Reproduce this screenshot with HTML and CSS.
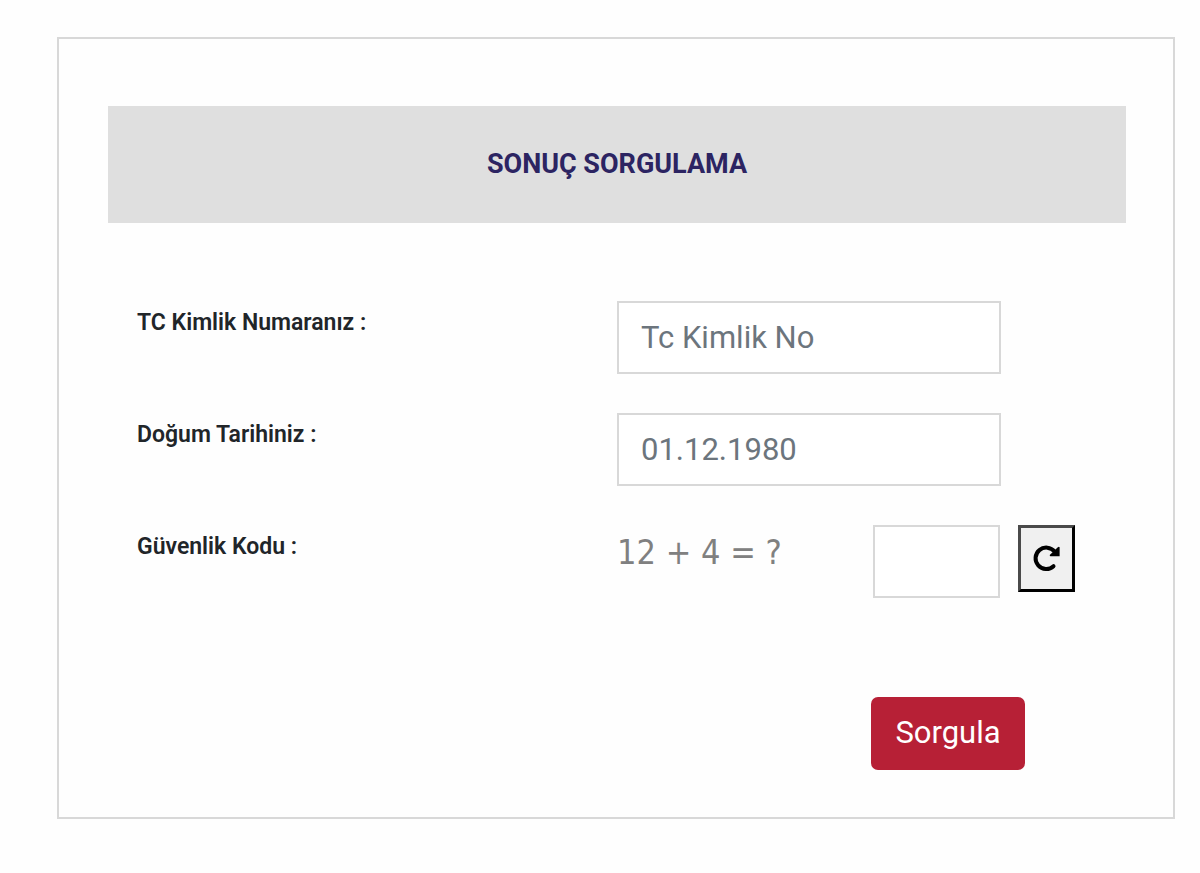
FILE: index.html
```html
<!DOCTYPE html>
<html lang="tr">
<head>
  <meta charset="utf-8">
  <meta name="viewport" content="width=device-width, initial-scale=1">
  <title>Sonuç Sorgulama</title>
  <link rel="stylesheet" href="styles.css">
</head>
<body>
  <main class="panel">
    <h1 class="panel-title">SONUÇ SORGULAMA</h1>
    <form class="query-form">
      <div class="row">
        <label class="label" for="tc">TC Kimlik Numaranız :</label>
        <div class="control"><input class="field" id="tc" type="text" placeholder="Tc Kimlik No"></div>
      </div>
      <div class="row">
        <label class="label" for="birth">Doğum Tarihiniz :</label>
        <div class="control"><input class="field" id="birth" type="text" placeholder="01.12.1980"></div>
      </div>
      <div class="row">
        <label class="label" for="code">Güvenlik Kodu :</label>
        <div class="control captcha">
          <span class="question">12 + 4 = ?</span>
          <input class="field code" id="code" type="text">
          <button class="refresh" type="button" aria-label="Kodu yenile">
            <svg width="28" height="28" viewBox="0 0 28 28" aria-hidden="true">
              <path d="M20.5 21.2A10.7 10.7 0 1 1 21.6 6.6" fill="none" stroke="#000" stroke-width="4" stroke-linecap="round"/>
              <path d="M26.6 2.2V11.3H17.4Q16.2 10.8 17 9.8L24.8 2.2Q26 1.2 26.6 2.2Z" fill="#000"/>
            </svg>
          </button>
        </div>
      </div>
      <div class="row actions">
        <button class="submit" type="submit">Sorgula</button>
      </div>
    </form>
  </main>
</body>
</html>
```

FILE: styles.css
```css
* {
  box-sizing: border-box;
}

body {
  margin: 0;
  padding: 37px 25px 54px 57px;
  background: #fefefe;
  color: #212529;
  font-family: Roboto, "Liberation Sans", sans-serif;
}

.panel {
  padding: 67px 47px 47px 49px;
  border: 2px solid #d8d8d8;
}

.panel-title {
  margin: 0;
  padding: 40px 16px;
  background: #dfdfdf;
  color: #2c2462;
  font-size: 27px;
  font-weight: 700;
  line-height: 37px;
  text-align: center;
}

.query-form {
  display: grid;
  gap: 38px;
  padding: 78px 29px 0;
}

.row {
  display: grid;
  grid-template-columns: 1fr 1fr;
}

.label {
  justify-self: start;
  align-self: start;
  padding-top: 7px;
  font-size: 23px;
  font-weight: 600;
  line-height: 30px;
}

.field {
  display: block;
  width: 80%;
  height: 73px;
  padding: 0 22px;
  border: 2px solid #d8d8d8;
  border-radius: 0;
  background: #fff;
  color: #6c757d;
  font: 400 31px Roboto, "Liberation Sans", sans-serif;
}

.field::placeholder {
  color: #6c757d;
  opacity: 1;
}

.control {
  min-height: 74px;
}

.captcha {
  display: flex;
  align-items: flex-start;
}

.question {
  flex: 0 1 256px;
  padding-top: 5px;
  color: #808080;
  font-family: "DejaVu Sans Condensed", "DejaVu Sans", sans-serif;
  font-size: 34px;
  line-height: 44px;
  white-space: nowrap;
}

.code {
  flex: 0 0 127px;
  margin-right: 18px;
}

.refresh {
  display: flex;
  flex: 0 0 57px;
  align-items: center;
  justify-content: center;
  height: 67px;
  padding: 0;
  border: 3px solid;
  border-color: #4a4a4a #000 #000 #4a4a4a;
  border-radius: 0;
  background: #f0f0f0;
}

.actions {
  padding-top: 60px;
}

.submit {
  grid-column: 2;
  justify-self: start;
  height: 73px;
  margin-left: 53%;
  padding: 0 24px 2px;
  border: 0;
  border-radius: 7px;
  background: #b72036;
  color: #fff;
  font: 400 31px Roboto, "Liberation Sans", sans-serif;
}
```
